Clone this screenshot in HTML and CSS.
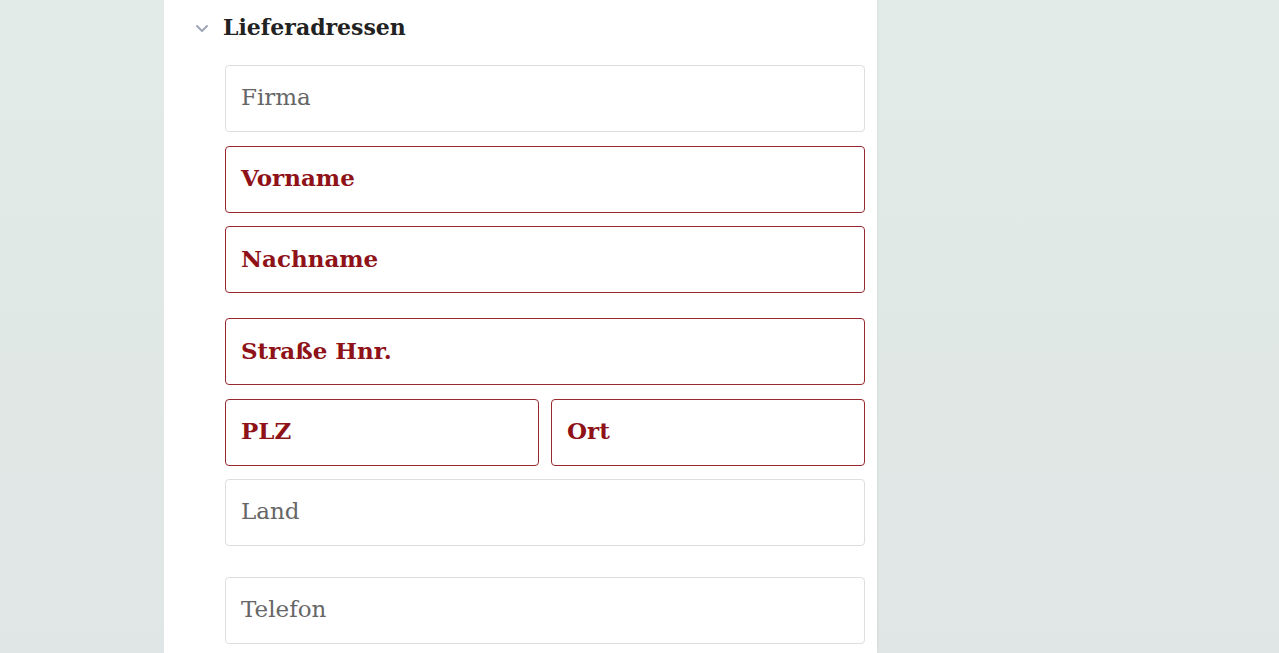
FILE: index.html
```html
<!DOCTYPE html>
<html lang="de">
<head>
    <meta charset="UTF-8">
    <title>Lieferadressen</title>
    <link rel="stylesheet" href="styles.css">
</head>
<body>
    <div class="panel">
        <h2 class="section-title">
            <svg class="chevron" width="14" height="9" viewBox="0 0 14 9"><path d="M2 2 L7 7 L12 2" fill="none" stroke="#9ea6b8" stroke-width="2" stroke-linecap="round" stroke-linejoin="round"/></svg>
            Lieferadressen
        </h2>
        <form class="address-form">
            <div class="field">Firma</div>
            <div class="field required">Vorname</div>
            <div class="field required">Nachname</div>
            <div class="field required spaced">Straße Hnr.</div>
            <div class="row">
                <div class="field required">PLZ</div>
                <div class="field required">Ort</div>
            </div>
            <div class="field">Land</div>
            <div class="field spaced-lg">Telefon</div>
        </form>
    </div>
</body>
</html>
```

FILE: styles.css
```css
body {
    margin: 0;
    height: 653px;
    overflow: hidden;
    background: linear-gradient(180deg, #e2ebe8, #dfe6e5);
    font-family: "DejaVu Serif", serif;
}

.panel {
    margin-left: 164px;
    width: 713px;
    height: 653px;
    background-color: #fff;
    box-shadow: 1px 0 2px rgba(0, 0, 0, 0.04);
    box-sizing: border-box;
    padding: 0 12px 0 61px;
}

.section-title {
    margin: 0 0 0 -30px;
    height: 54px;
    display: flex;
    align-items: center;
    gap: 14px;
    font-size: 22px;
    font-weight: bold;
    color: #222;
}

.chevron {
    margin-top: 3px;
}

.address-form {
    margin-top: 11px;
    display: flex;
    flex-direction: column;
    gap: 13.5px;
}

.field {
    height: 67px;
    box-sizing: border-box;
    border: 1px solid #dedede;
    border-radius: 4px;
    padding: 0 15px 3px;
    display: flex;
    align-items: center;
    font-size: 23px;
    color: #666;
}

.field.required {
    border-color: #962a2f;
    color: #8e1217;
    font-weight: bold;
}

.spaced {
    margin-top: 11.5px;
}

.spaced-lg {
    margin-top: 17px;
}

.row {
    display: grid;
    grid-template-columns: 1fr 1fr;
    gap: 12px;
}
```
